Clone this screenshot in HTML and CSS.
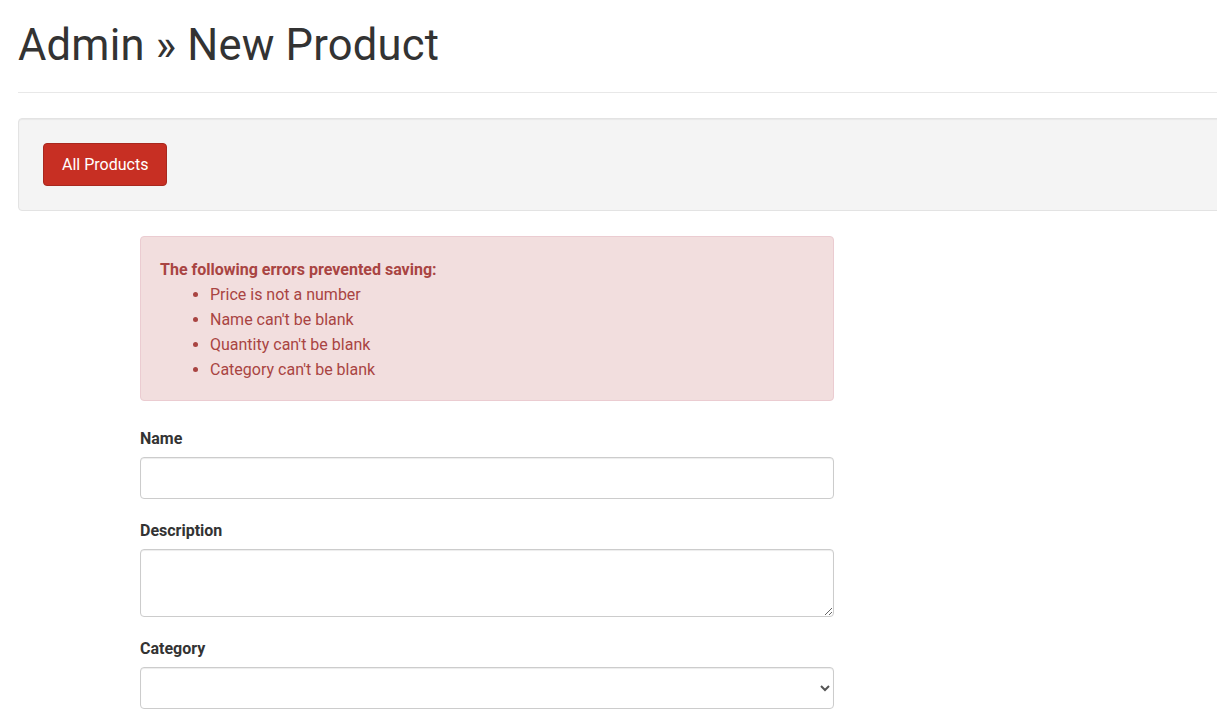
FILE: index.html
```html
<!DOCTYPE html>
<html lang="en">
<head>
<meta charset="utf-8">
<title>Admin » New Product</title>
<link rel="stylesheet" href="styles.css">
</head>
<body>
<div class="page">
  <h1 class="title">Admin » New Product</h1>
  <hr class="rule">
  <div class="well">
    <a class="btn" href="#">All Products</a>
  </div>
  <div class="form-col">
    <div class="alert">
      <strong class="alert-head">The following errors prevented saving:</strong>
      <ul class="alert-list">
        <li>Price is not a number</li>
        <li>Name can't be blank</li>
        <li>Quantity can't be blank</li>
        <li>Category can't be blank</li>
      </ul>
    </div>
    <div class="group">
      <label class="label" for="name">Name</label>
      <input class="control" id="name" type="text">
    </div>
    <div class="group">
      <label class="label" for="desc">Description</label>
      <textarea class="control area" id="desc"></textarea>
    </div>
    <div class="group">
      <label class="label" for="cat">Category</label>
      <select class="control select" id="cat"><option></option></select>
    </div>
  </div>
</div>
</body>
</html>
```

FILE: styles.css
```css
html, body {
  margin: 0;
  padding: 0;
  background: #fff;
  overflow: hidden;
}
body {
  font-family: Roboto, "Liberation Sans", sans-serif;
  font-size: 16px;
  color: #333;
}
.page {
  padding-left: 18px;
  margin-right: -30px;
}
.title {
  margin: 0;
  padding-top: 19px;
  font-size: 43.5px;
  font-weight: 400;
  line-height: 54px;
  color: #333;
  letter-spacing: 0.2px;
}
.rule {
  margin: 19px 0 0 0;
  border: 0;
  border-top: 1px solid #e8e8e8;
  height: 0;
}
.well {
  margin-top: 25px;
  height: 93px;
  box-sizing: border-box;
  background: #f4f4f4;
  border: 1px solid #e3e3e3;
  border-radius: 4px;
  box-shadow: inset 0 1px 1px rgba(0,0,0,0.05);
  padding: 24px 24px;
}
.btn {
  display: inline-block;
  box-sizing: border-box;
  height: 43px;
  padding: 0 18px;
  line-height: 41px;
  background: #c72f23;
  border: 1px solid #a8281e;
  border-radius: 4px;
  color: #fff;
  text-decoration: none;
  font-size: 16px;
}
.form-col {
  margin-left: 122px;
  width: 694px;
  padding-top: 25px;
}
.alert {
  box-sizing: border-box;
  background: #f2dede;
  border: 1px solid #ebccd1;
  border-radius: 4px;
  color: #a94442;
  padding: 23px 19px 18px 19px;
  height: 165px;
}
.alert-head {
  display: block;
  font-weight: 700;
  line-height: 20px;
  font-size: 16px;
}
.alert-list {
  margin: 2px 0 0 0;
  padding-left: 50px;
  line-height: 25px;
}
.group {
  margin-top: 28px;
}
.group + .group {
  margin-top: 22px;
}
.label {
  display: block;
  font-weight: 700;
  font-size: 16px;
  line-height: 20px;
  margin-bottom: 8px;
}
.control {
  display: block;
  box-sizing: border-box;
  width: 694px;
  height: 42px;
  border: 1px solid #ccc;
  border-radius: 4px;
  background: #fff;
  font-family: inherit;
  font-size: 16px;
  color: #555;
  padding: 6px 12px;
  margin: 0;
  box-shadow: inset 0 1px 1px rgba(0,0,0,0.075);
}
.area {
  height: 68px;
  resize: vertical;
}
.select {
  padding: 6px 8px;
}
```
